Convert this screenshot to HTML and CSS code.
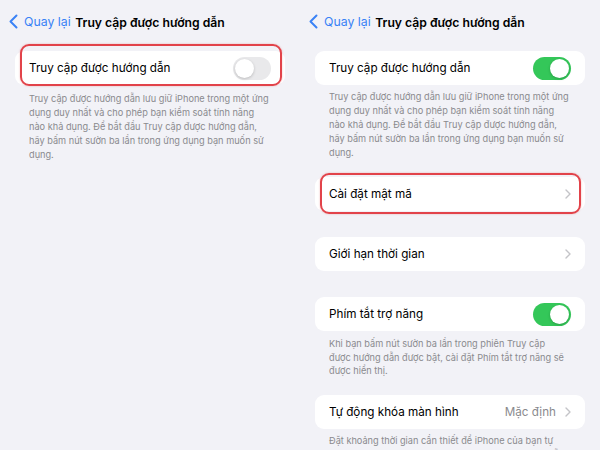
FILE: index.html
```html
<!DOCTYPE html>
<html lang="vi">
<head>
  <meta charset="UTF-8">
  <title>Truy cập được hướng dẫn</title>
  <link rel="stylesheet" href="styles.css">
</head>
<body>

  <div class="screens">

    <!-- before: feature is off -->
    <div class="screen">
      <div class="navbar">
        <a class="back">
          <svg width="9" height="15" viewBox="0 0 9 15"><polyline points="7.5,1.5 1.5,7.5 7.5,13.5" fill="none" stroke="#3a82f6" stroke-width="2" stroke-linecap="round" stroke-linejoin="round"/></svg>
          Quay lại
        </a>
        <div class="nav-title">Truy cập được hướng dẫn</div>
      </div>

      <div class="group first">
        <div class="row">
          <span class="label">Truy cập được hướng dẫn</span>
          <span class="toggle"></span>
        </div>
        <div class="highlight tall"></div>
      </div>
      <p class="footer lower">Truy cập được hướng dẫn lưu giữ iPhone trong một ứng<br>dụng duy nhất và cho phép bạn kiểm soát tính năng<br>nào khả dụng. Để bắt đầu Truy cập được hướng dẫn,<br>hãy bấm nút sườn ba lần trong ứng dụng bạn muốn sử<br>dụng.</p>
    </div>

    <!-- after: feature is on -->
    <div class="screen">
      <div class="navbar">
        <a class="back">
          <svg width="9" height="15" viewBox="0 0 9 15"><polyline points="7.5,1.5 1.5,7.5 7.5,13.5" fill="none" stroke="#3a82f6" stroke-width="2" stroke-linecap="round" stroke-linejoin="round"/></svg>
          Quay lại
        </a>
        <div class="nav-title">Truy cập được hướng dẫn</div>
      </div>

      <div class="group first">
        <div class="row">
          <span class="label">Truy cập được hướng dẫn</span>
          <span class="toggle on"></span>
        </div>
      </div>
      <p class="footer">Truy cập được hướng dẫn lưu giữ iPhone trong một ứng<br>dụng duy nhất và cho phép bạn kiểm soát tính năng<br>nào khả dụng. Để bắt đầu Truy cập được hướng dẫn,<br>hãy bấm nút sườn ba lần trong ứng dụng bạn muốn sử<br>dụng.</p>

      <div class="group">
        <div class="row">
          <span class="label">Cài đặt mật mã</span>
          <svg class="chevron" width="6" height="10" viewBox="0 0 6 10"><polyline points="1,1 5,5 1,9" fill="none" stroke="#c4c4c8" stroke-width="1.4" stroke-linecap="round" stroke-linejoin="round"/></svg>
        </div>
        <div class="highlight"></div>
      </div>

      <div class="group spaced">
        <div class="row">
          <span class="label">Giới hạn thời gian</span>
          <svg class="chevron" width="6" height="10" viewBox="0 0 6 10"><polyline points="1,1 5,5 1,9" fill="none" stroke="#c4c4c8" stroke-width="1.4" stroke-linecap="round" stroke-linejoin="round"/></svg>
        </div>
      </div>

      <div class="group spaced">
        <div class="row">
          <span class="label">Phím tắt trợ năng</span>
          <span class="toggle on"></span>
        </div>
      </div>
      <p class="footer short">Khi bạn bấm nút sườn ba lần trong phiên Truy cập<br>được hướng dẫn được bật, cài đặt Phím tắt trợ năng sẽ<br>được hiển thị.</p>

      <div class="group">
        <div class="row">
          <span class="label">Tự động khóa màn hình</span>
          <span class="value">Mặc định</span>
          <svg class="chevron" width="6" height="10" viewBox="0 0 6 10"><polyline points="1,1 5,5 1,9" fill="none" stroke="#c4c4c8" stroke-width="1.4" stroke-linecap="round" stroke-linejoin="round"/></svg>
        </div>
      </div>
      <p class="footer">Đặt khoảng thời gian cần thiết để iPhone của bạn tự<br>động khóa khi ở trong phiên Truy cập được hướng dẫn.</p>
    </div>

  </div>

</body>
</html>
```

FILE: styles.css
```css
body {
  margin: 0;
  background: #f2f2f7;
  font-family: Inter, 'Noto Sans', sans-serif;
  color: #000;
  overflow: hidden;
}

.screens {
  display: flex;
  height: 450px;
}

.screen {
  width: 300px;
  flex-shrink: 0;
}

.navbar {
  position: relative;
  height: 44px;
  display: flex;
  align-items: center;
  justify-content: center;
}

.back {
  position: absolute;
  left: 9px;
  top: 14px;
  display: flex;
  align-items: center;
  gap: 6px;
  color: #3a82f6;
  font-size: 12.3px;
}

.nav-title {
  font-size: 12.2px;
  font-weight: 600;
}

.group {
  position: relative;
  margin: 0 15px;
  background: #fff;
  border-radius: 9px;
}

.group.first {
  margin-top: 7px;
}

.group.spaced {
  margin-top: 26px;
}

.row {
  height: 34px;
  display: flex;
  align-items: center;
  padding: 0 14px;
  font-size: 11.7px;
}

.label {
  flex: 1;
}

.value {
  color: #8a8a8e;
  margin-right: 9px;
}

.toggle {
  position: relative;
  width: 38px;
  height: 23px;
  border-radius: 12px;
  background: #e9e9eb;
}

.toggle::after {
  content: '';
  position: absolute;
  top: 2px;
  left: 2px;
  width: 19px;
  height: 19px;
  border-radius: 50%;
  background: #fff;
  box-shadow: 0 1px 3px rgba(0, 0, 0, 0.2);
}

.toggle.on {
  background: #34c759;
}

.toggle.on::after {
  left: 17px;
}

.highlight {
  position: absolute;
  top: -4px;
  bottom: -3px;
  left: 5px;
  right: 4px;
  border: 2px solid #e2434a;
  border-radius: 9px;
  box-shadow: 0 0 2px rgba(226, 67, 74, 0.4);
}

.highlight.tall {
  top: -7px;
  bottom: -1px;
  right: 3px;
}

.footer {
  margin: 0 15px 17px 29px;
  padding-top: 5px;
  font-size: 9.2px;
  line-height: 14px;
  color: #8a8a8e;
  white-space: nowrap;
}

.footer.lower {
  padding-top: 7px;
}

.footer.short {
  padding-top: 6px;
  line-height: 13.5px;
}
```
